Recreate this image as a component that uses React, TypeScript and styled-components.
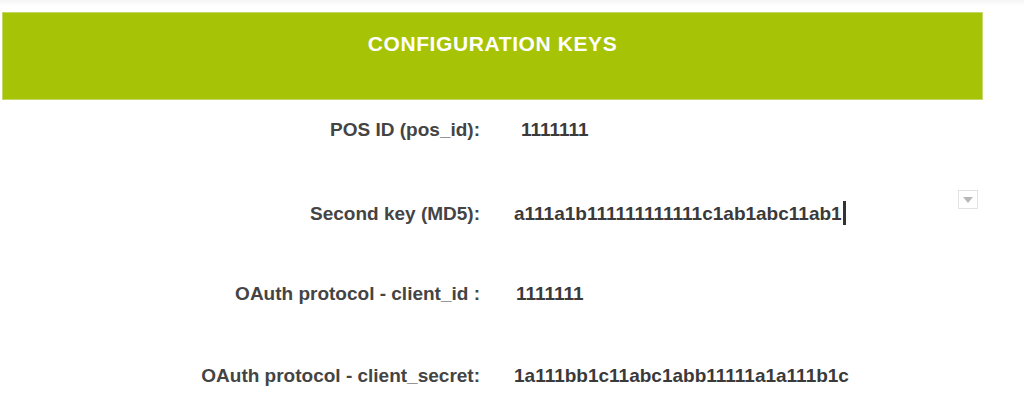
import React from 'react';
import styled, { createGlobalStyle } from 'styled-components';

const GlobalStyle = createGlobalStyle`
  html, body {
    margin: 0;
    padding: 0;
    background: #ffffff;
  }
  body {
    font-family: "Liberation Sans", Arial, sans-serif;
  }
`;

interface KeyField {
  label: string;
  value: string;
  indent?: number;
  focused?: boolean;
  withSelect?: boolean;
}

const fields: KeyField[] = [
  { label: 'POS ID (pos_id):', value: '1111111', indent: 7 },
  { label: 'Second key (MD5):', value: 'a111a1b111111111111c1ab1abc11ab1', focused: true, withSelect: true },
  { label: 'OAuth protocol - client_id :', value: '1111111', indent: 2 },
  { label: 'OAuth protocol - client_secret:', value: '1a111bb1c11abc1abb11111a1a111b1c' },
];

const App: React.FC = () => {
  return (
    <>
      <GlobalStyle />
      <Page>
        <Header>
          <Title>CONFIGURATION KEYS</Title>
        </Header>

        <Form>
          {fields.map((f) => (
            <Row key={f.label}>
              <Label>{f.label}</Label>
              <Value $indent={f.indent ?? 0}>
                {f.value}
                {f.focused && <Caret />}
              </Value>
              <SelectSlot>
                {f.withSelect && (
                  <SelectToggle>
                    <svg width="10" height="6" viewBox="0 0 10 6">
                      <path d="M0 0 H10 L5 6 Z" fill="#b8b8b8" />
                    </svg>
                  </SelectToggle>
                )}
              </SelectSlot>
            </Row>
          ))}
        </Form>
      </Page>
    </>
  );
};

export default App;

const Page = styled.div`
  width: 1024px;
  height: 412px;
  overflow: hidden;
  padding: 12px 41px 0 2px;
  box-sizing: border-box;
  background: linear-gradient(to bottom, #f4f4f4 0px, #ffffff 6px);
`;

const Header = styled.div`
  height: 88px;
  background: #a7c305;
  border: 1px solid #c4d86a;
  box-sizing: border-box;
  display: flex;
  justify-content: center;
  align-items: flex-start;
  padding-top: 19px;
`;

const Title = styled.h1`
  margin: 0;
  color: #ffffff;
  font-size: 21px;
  font-weight: bold;
  line-height: 24px;
  letter-spacing: 0.6px;
`;

const Form = styled.div`
  display: flex;
  flex-direction: column;
  gap: 61px;
  padding-top: 19px;
  padding-right: 5px;
`;

const Row = styled.div`
  display: grid;
  grid-template-columns: 478px 1fr 20px;
  column-gap: 34px;
  align-items: center;
  height: 21px;
`;

const Label = styled.div`
  text-align: right;
  color: #444444;
  font-size: 19px;
  font-weight: bold;
  line-height: 21px;
  white-space: nowrap;
`;

const Value = styled.div<{ $indent: number }>`
  display: flex;
  align-items: center;
  padding-left: ${(p) => p.$indent}px;
  color: #3a3a3a;
  font-size: 19px;
  font-weight: bold;
  line-height: 21px;
  white-space: nowrap;
`;

const Caret = styled.span`
  display: inline-block;
  width: 3px;
  height: 24px;
  margin-left: 1px;
  background: #333333;
`;

const SelectSlot = styled.div`
  display: flex;
  align-items: center;
  height: 21px;
`;

const SelectToggle = styled.div`
  width: 20px;
  height: 19px;
  margin-top: -27px;
  box-sizing: border-box;
  border: 1px solid #e2e2e2;
  background: #ffffff;
  display: flex;
  align-items: center;
  justify-content: center;
`;
